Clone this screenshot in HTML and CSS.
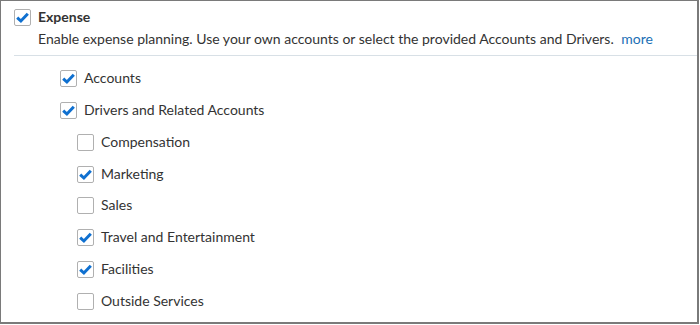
FILE: index.html
```html
<!DOCTYPE html>
<html lang="en">
<head>
    <meta charset="UTF-8">
    <title>Expense</title>
    <link rel="stylesheet" href="styles.css">
</head>
<body>
<div class="panel">
    <div class="row head-row">
        <span class="box checked"><svg viewBox="0 0 15 15"><path d="M2.2 7.6 L5.9 11 L12.8 3.8"/></svg></span>
        <span class="head-label">Expense</span>
    </div>
    <div class="desc">
        Enable expense planning. Use your own accounts or select the provided Accounts and Drivers.
        <a href="#" class="more">more</a>
    </div>
    <div class="sep"></div>

    <div class="options">
        <div class="row lvl1">
            <span class="box checked"><svg viewBox="0 0 15 15"><path d="M2.2 7.6 L5.9 11 L12.8 3.8"/></svg></span>
            <span class="label">Accounts</span>
        </div>
        <div class="row lvl1">
            <span class="box checked"><svg viewBox="0 0 15 15"><path d="M2.2 7.6 L5.9 11 L12.8 3.8"/></svg></span>
            <span class="label">Drivers and Related Accounts</span>
        </div>
        <div class="row lvl2">
            <span class="box"></span>
            <span class="label">Compensation</span>
        </div>
        <div class="row lvl2">
            <span class="box checked"><svg viewBox="0 0 15 15"><path d="M2.2 7.6 L5.9 11 L12.8 3.8"/></svg></span>
            <span class="label">Marketing</span>
        </div>
        <div class="row lvl2">
            <span class="box"></span>
            <span class="label">Sales</span>
        </div>
        <div class="row lvl2">
            <span class="box checked"><svg viewBox="0 0 15 15"><path d="M2.2 7.6 L5.9 11 L12.8 3.8"/></svg></span>
            <span class="label">Travel and Entertainment</span>
        </div>
        <div class="row lvl2">
            <span class="box checked"><svg viewBox="0 0 15 15"><path d="M2.2 7.6 L5.9 11 L12.8 3.8"/></svg></span>
            <span class="label">Facilities</span>
        </div>
        <div class="row lvl2">
            <span class="box"></span>
            <span class="label">Outside Services</span>
        </div>
    </div>
</div>
</body>
</html>
```

FILE: styles.css
```css
body, html {
    margin: 0;
    padding: 0;
}
body {
    font-family: Lato, "Liberation Sans", sans-serif;
    font-size: 14px;
    color: #333;
    background: #fff;
}
.panel {
    width: 699px;
    height: 324px;
    box-sizing: border-box;
    border: 1px solid #7a7a7a;
    border-right-width: 2px;
    border-bottom-width: 2px;
    padding-left: 13px;
}
.row {
    display: flex;
    align-items: center;
    height: 31.75px;
}
.head-row {
    height: 33px;
}
.head-label {
    font-weight: bold;
    margin-left: 7px;
    padding-bottom: 3px;
}
.desc {
    padding-left: 24px;
    line-height: 18px;
    height: 18px;
    margin-top: -4px;
}
.more {
    color: #1b6fb5;
    text-decoration: none;
    margin-left: 4px;
}
.sep {
    height: 1px;
    background: #d8e0e6;
    margin-top: 7px;
}
.options {
    padding-top: 7px;
}
.lvl1 {
    padding-left: 46px;
}
.lvl2 {
    padding-left: 63px;
}
.label {
    margin-left: 7px;
    padding-bottom: 2px;
}
.box {
    width: 17px;
    height: 17px;
    box-sizing: border-box;
    border: 1px solid #b0b0b0;
    border-radius: 2px;
    background: #fff;
    display: inline-flex;
    flex-shrink: 0;
}
.box svg {
    width: 15px;
    height: 15px;
}
.box path {
    fill: none;
    stroke: #0f70d0;
    stroke-width: 3;
}
```
